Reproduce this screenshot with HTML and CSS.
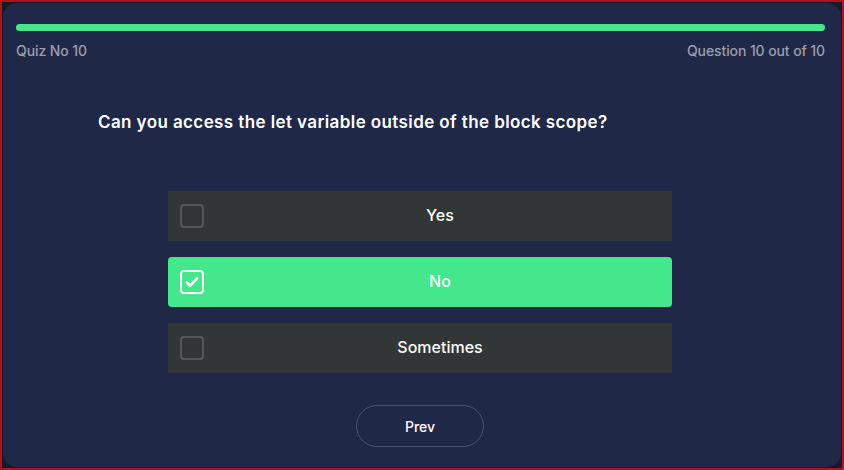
FILE: index.html
```html
<!DOCTYPE html>
<html lang="en">
<head>
<meta charset="utf-8">
<title>Quiz</title>
<link rel="stylesheet" href="styles.css">
</head>
<body>
<div class="frame">
  <main class="card">
    <div class="progress"><div class="progress-fill"></div></div>
    <div class="meta">
      <span>Quiz No 10</span>
      <span>Question 10 out of 10</span>
    </div>
    <h1 class="question">Can you access the let variable outside of the block scope?</h1>
    <ul class="options">
      <li class="option">
        <span class="check"></span>
        <span class="label">Yes</span>
      </li>
      <li class="option selected">
        <span class="check">
          <svg viewBox="0 0 24 24" width="18" height="18"><path d="M5 12.5l4.5 4.5L19 7" fill="none" stroke="#fff" stroke-width="3.4" stroke-linecap="round" stroke-linejoin="round"/></svg>
        </span>
        <span class="label">No</span>
      </li>
      <li class="option">
        <span class="check"></span>
        <span class="label">Sometimes</span>
      </li>
    </ul>
    <div class="actions">
      <button class="btn">Prev</button>
    </div>
  </main>
</div>
</body>
</html>
```
FILE: styles.css
```css
* { box-sizing: border-box; }
html, body { margin: 0; height: 100%; }
body {
  font-family: Inter, "Noto Sans", sans-serif;
  background: #141a2e;
}
.frame {
  height: 470px;
  border: 2px solid #b3101b;
  padding: 1px;
  background: #141a2e;
}
.card {
  height: 100%;
  background: #1f2847;
  border-radius: 14px;
  padding: 21px 16px 0 13px;
  display: flex;
  flex-direction: column;
}
.progress {
  height: 7px;
  border-radius: 4px;
  background: #2c3556;
}
.progress-fill {
  height: 100%;
  width: 100%;
  border-radius: 4px;
  background: #44e78c;
}
.meta {
  display: flex;
  justify-content: space-between;
  margin-top: 11px;
  font-size: 14px;
  font-weight: 500;
  color: #9b9fb0;
  line-height: 18px;
  letter-spacing: -0.1px;
}
.question {
  margin: 50px 0 0 82px;
  font-size: 17px;
  font-weight: 600;
  color: #ffffff;
  line-height: 24px;
  letter-spacing: 0.4px;
}
.options {
  list-style: none;
  margin: 57px 0 0 152px;
  padding: 0;
  width: 504px;
  display: flex;
  flex-direction: column;
  gap: 16px;
}
.option {
  height: 50px;
  padding-left: 12px;
  background: #333637;
  display: flex;
  align-items: center;
  color: #ffffff;
  font-size: 16px;
  font-weight: 500;
}
.option.selected {
  background: #44e78c;
  border-radius: 4px;
}
.label {
  flex: 1;
  margin-left: 4px;
  padding-bottom: 2px;
  text-align: center;
}
.check {
  flex: none;
  width: 24px;
  height: 24px;
  border: 2px solid #55585b;
  border-radius: 4px;
  display: flex;
  align-items: center;
  justify-content: center;
}
.option.selected .check { border-color: #ffffff; }
.actions {
  display: flex;
  justify-content: center;
  padding-right: 1px;
  margin-top: 32px;
}
.btn {
  width: 128px;
  height: 42px;
  border: 1px solid #4a5271;
  border-radius: 21px;
  background: transparent;
  color: #ffffff;
  font-family: inherit;
  font-size: 14px;
  font-weight: 500;
}
```
